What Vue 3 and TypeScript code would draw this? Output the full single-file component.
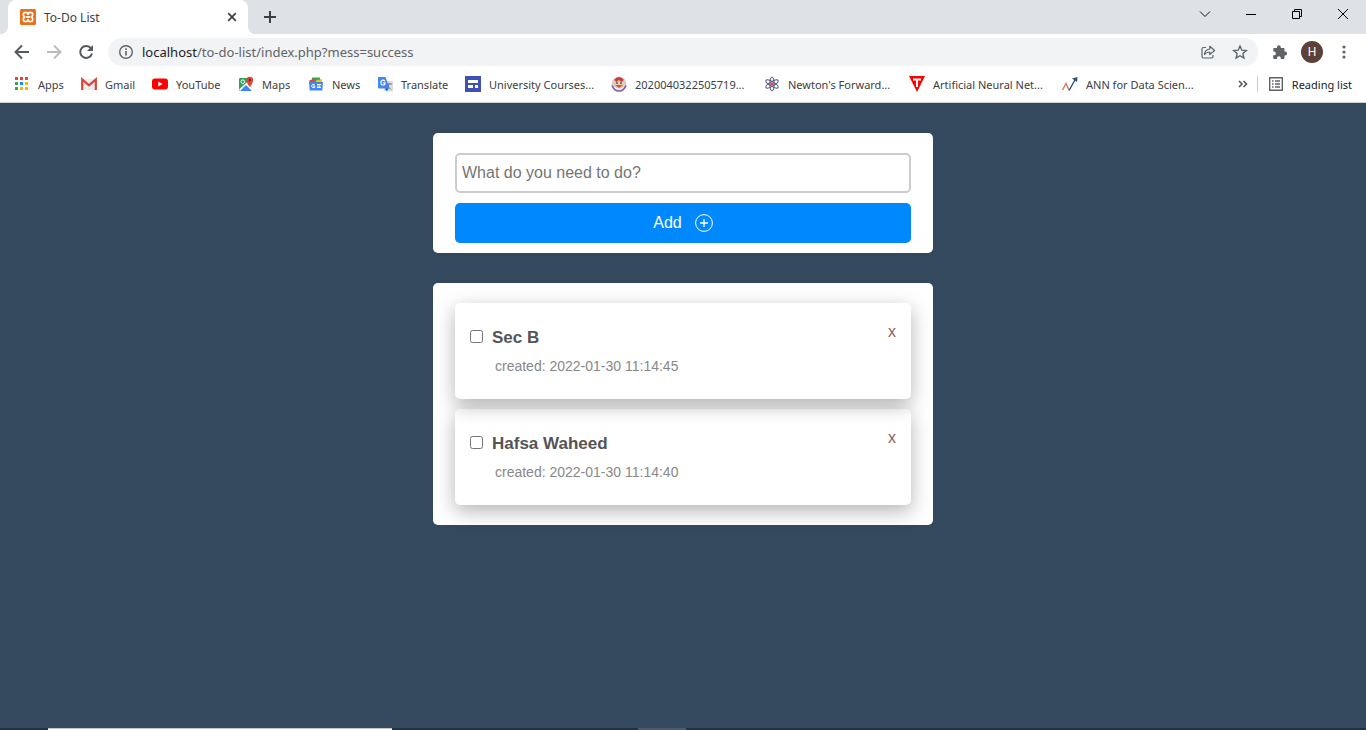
<script setup lang="ts">
import { ref } from 'vue'

interface Bookmark { icon: string; label: string }
interface Todo { id: number; title: string; created: string; done: boolean }

const bookmarks: Bookmark[] = [
  { icon: 'apps', label: 'Apps' },
  { icon: 'gmail', label: 'Gmail' },
  { icon: 'youtube', label: 'YouTube' },
  { icon: 'maps', label: 'Maps' },
  { icon: 'news', label: 'News' },
  { icon: 'translate', label: 'Translate' },
  { icon: 'university', label: 'University Courses...' },
  { icon: 'crest', label: '2020040322505719...' },
  { icon: 'atom', label: "Newton's Forward..." },
  { icon: 'tee', label: 'Artificial Neural Net...' },
  { icon: 'chart', label: 'ANN for Data Scien...' },
]

const draft = ref('')
const todos = ref<Todo[]>([
  { id: 2, title: 'Sec B', created: '2022-01-30 11:14:45', done: false },
  { id: 1, title: 'Hafsa Waheed', created: '2022-01-30 11:14:40', done: false },
])

function add() {
  const title = draft.value.trim()
  if (!title) return
  const created = new Date().toISOString().slice(0, 19).replace('T', ' ')
  todos.value.unshift({ id: Date.now(), title, created, done: false })
  draft.value = ''
}

function remove(id: number) {
  todos.value = todos.value.filter((t) => t.id !== id)
}
</script>

<template>
  <div class="window">
    <header class="chrome">
      <div class="tabs">
        <div class="tab">
          <svg class="icon" viewBox="0 0 16 16">
            <rect width="16" height="16" rx="1.500" fill="#e8711c" />
            <path d="M5.200 3.500Q8 3.200 8 6Q8 3.200 10.800 3.500Q13 3.700 12.600 6Q12.500 7.300 11.500 8Q12.500 8.700 12.600 10Q13 12.300 10.800 12.500Q8 12.800 8 10Q8 12.800 5.200 12.500Q3 12.300 3.400 10Q3.500 8.700 4.500 8Q3.500 7.300 3.400 6Q3 3.700 5.200 3.500z" fill="none" stroke="#fff" stroke-width="1.700" />
            <path d="M6 8h4" stroke="#fff" stroke-width="1.800" />
          </svg>
          <span class="tab-title">To-Do List</span>
          <button class="plain" aria-label="Close tab">
            <svg class="icon" viewBox="0 0 16 16"><path d="M4.200 4.200l7.600 7.600M11.800 4.200l-7.600 7.600" stroke="#3c4043" stroke-width="1.700" /></svg>
          </button>
        </div>
        <button class="plain new-tab" aria-label="New tab">
          <svg class="icon" viewBox="0 0 16 16"><path d="M8 2v12M2 8h12" stroke="#3c4043" stroke-width="2" /></svg>
        </button>
        <div class="controls">
          <button class="plain" aria-label="Search tabs"><svg class="icon" viewBox="0 0 16 16"><path d="M3 5.500l5 5l5-5" fill="none" stroke="#111" /></svg></button>
          <button class="plain" aria-label="Minimize"><svg class="icon" viewBox="0 0 16 16"><path d="M3 8.500h10" stroke="#000" /></svg></button>
          <button class="plain" aria-label="Restore"><svg class="icon" viewBox="0 0 16 16"><path d="M3.500 5.500h7v7h-7zM5.500 5.500v-2h7v7h-2" fill="none" stroke="#000" /></svg></button>
          <button class="plain" aria-label="Close"><svg class="icon" viewBox="0 0 16 16"><path d="M3 3l10 10M13 3L3 13" stroke="#000" /></svg></button>
        </div>
      </div>

      <div class="toolbar">
        <button class="plain" aria-label="Back"><svg class="icon" viewBox="0 0 16 16"><path d="M15 8H2M8 1.500L1.500 8L8 14.500" fill="none" stroke="#54585c" stroke-width="1.900" /></svg></button>
        <button class="plain" aria-label="Forward"><svg class="icon" viewBox="0 0 16 16"><path d="M1 8h13M8 1.500L14.500 8L8 14.500" fill="none" stroke="#babcbe" stroke-width="1.900" /></svg></button>
        <button class="plain" aria-label="Reload"><svg class="icon" viewBox="0 0 16 16"><path d="M13 4.300A6 6 0 1 0 14 9.500" fill="none" stroke="#54585c" stroke-width="2" /><path d="M15 1v6H9z" fill="#54585c" /></svg></button>
        <div class="omnibox">
          <svg class="icon" viewBox="0 0 16 16"><circle cx="8" cy="8" r="6.300" fill="none" stroke="#5f6368" stroke-width="1.400" /><path d="M8 7v4.500M8 4.300v1.600" stroke="#5f6368" stroke-width="1.600" /></svg>
          <div class="url"><span class="host">localhost</span>/to-do-list/index.php?mess=success</div>
          <button class="plain" aria-label="Share"><svg class="icon" viewBox="0 0 16 16"><path d="M6 3.500H3.500q-1.500 0-1.500 1.500v7.500Q2 14 3.500 14h8q1.500 0 1.500-1.500V11" fill="none" stroke="#5f6368" stroke-width="1.200" /><path d="M4.500 10.500Q5 5.500 9.800 5V2.300L14.600 6.500L9.800 10.500V8Q6.500 8 4.500 10.500z" fill="none" stroke="#5f6368" stroke-width="1.200" stroke-linejoin="round" /></svg></button>
          <button class="plain" aria-label="Bookmark this tab"><svg class="icon" viewBox="0 0 16 16"><path d="M8 2l1.800 4.200l4.500.4l-3.400 3l1 4.400L8 11.700L4.100 14l1-4.400l-3.400-3l4.500-.4z" fill="none" stroke="#5f6368" stroke-width="1.400" /></svg></button>
        </div>
        <button class="plain" aria-label="Extensions"><svg class="icon" viewBox="0 0 16 16"><path d="M1.500 4H5V3.200a1.900 1.900 0 0 1 3.800 0V4h2.700q1 0 1 1v2.600h.7a1.900 1.900 0 0 1 0 3.800h-.7V14q0 1-1 1H8.800v-.8a1.900 1.900 0 0 0-3.800 0V15H2.200q-1 0-1-1v-2.700H2a1.900 1.900 0 0 0 0-3.800h-.8z" fill="#5f6368" /></svg></button>
        <button class="plain avatar">H</button>
        <button class="plain" aria-label="Menu"><svg class="icon" viewBox="0 0 16 16"><g fill="#5f6368"><circle cx="8" cy="3" r="1.600" /><circle cx="8" cy="8" r="1.600" /><circle cx="8" cy="13" r="1.600" /></g></svg></button>
      </div>

      <nav class="bookmarks">
        <a v-for="b in bookmarks" :key="b.label" class="bookmark" href="#">
          <svg class="icon" viewBox="0 0 16 16">
            <g v-if="b.icon === 'apps'">
              <path d="M1 1h3v3H1zM6 1h3v3H6zM11 1h3v3h-3z" fill="#ea4335" />
              <path d="M1 6h3v3H1zM1 11h3v3H1z" fill="#34a853" />
              <path d="M6 6h3v3H6z" fill="#1a8cff" />
              <path d="M11 6h3v3h-3zM6 11h3v3H6zM11 11h3v3h-3z" fill="#fbb400" />
            </g>
            <g v-else-if="b.icon === 'gmail'">
              <path d="M1 3h14v11H1z" fill="#ececec" />
              <path d="M1.200 14V3.500L8 9.300l6.800-5.800V14" fill="none" stroke="#dc4437" stroke-width="2.200" />
            </g>
            <g v-else-if="b.icon === 'youtube'">
              <rect y="2.500" width="16" height="11" rx="3" fill="#f00" /><path d="M6.300 5.500v5l4.200-2.500z" fill="#fff" />
            </g>
            <g v-else-if="b.icon === 'maps'">
              <rect x="1" y="2" width="13" height="13" rx="1" fill="#34a356" />
              <path d="M1 13.500L12.500 3L14 7v8H2z" fill="#fff" />
              <path d="M2 15l6-6l6 6z" fill="#4285f4" /><path d="M9 8l4-3l1 8z" fill="#dadada" />
              <circle cx="4.800" cy="5.700" r="1.800" fill="none" stroke="#fff" />
              <path d="M11.800 11Q8.500 7 8.500 4a3.300 3.300 0 0 1 6.600 0q0 3-3.300 7z" fill="#e14335" /><circle cx="11.800" cy="4" r="1.200" fill="#8b1e16" />
            </g>
            <g v-else-if="b.icon === 'news'">
              <path d="M4 1.500h8V8H4z" fill="#34a853" /><path d="M1.200 4.500L6 2.800L8 8H2z" fill="#ea4335" /><path d="M8 4.500l6-1.500v5H8z" fill="#fbbc04" />
              <path d="M1 6h14l-.7 8.500H1.700z" fill="#4285f4" />
              <path d="M6.700 8.600Q4 7.500 3.500 10Q4 12.500 6.700 11.500V10H5M9 8.500h4M9 10h3.500M9 11.500h4" fill="none" stroke="#fff" />
            </g>
            <g v-else-if="b.icon === 'translate'">
              <rect x="7" y="5" width="9" height="10.500" rx="1" fill="#dadce0" /><path d="M9 8h6M12 7v1q-.5 3-2.500 4.500M10 9.500l4 4" fill="none" stroke="#607d8b" />
              <path d="M1 1h7.500l4 11.500H2q-1 0-1-1z" fill="#4285f4" /><path d="M8 12.500h4L9.500 15z" fill="#174ea6" />
              <path d="M8 5Q5.500 3 4 5.500Q3.500 9 6 9Q8 9 8 6.900H6.200" fill="none" stroke="#fff" stroke-width="1.200" />
            </g>
            <g v-else-if="b.icon === 'university'">
              <rect width="16" height="16" fill="#3f51b5" /><path d="M3 4h10v3H3zM3 9h5v3H3zM10 9h3v3h-3z" fill="#fff" />
            </g>
            <g v-else-if="b.icon === 'crest'">
              <circle cx="8" cy="8" r="7.500" fill="#d9ccd6" /><circle cx="8" cy="7" r="5.500" fill="#e9c9a0" />
              <path d="M3 4Q8-2 13 4L10.500 6L8 4L5.500 6z" fill="#c9403a" /><path d="M4 9h8L8 12z" fill="#d0524a" /><path d="M5 7h2M9 7h2" stroke="#37699a" stroke-width="1.500" />
              <path d="M1 9.500Q3 15 8 15t7-5.500" fill="none" stroke="#7a5eb0" stroke-width="1.600" /><path d="M3.500 11.500Q8 15 12.500 11.500" fill="none" stroke="#fff" />
            </g>
            <g v-else-if="b.icon === 'atom'" fill="none" stroke="#4a5478">
              <ellipse cx="8" cy="8" rx="2.200" ry="7" /><ellipse cx="8" cy="8" rx="2.200" ry="7" transform="rotate(60 8 8)" /><ellipse cx="8" cy="8" rx="2.200" ry="7" transform="rotate(120 8 8)" />
              <circle cx="8" cy="8" r="1.600" fill="#f33" stroke="none" />
            </g>
            <g v-else-if="b.icon === 'tee'">
              <path d="M0 0h16L8 16z" fill="#f00" /><path d="M4 3.500h8M8 3.500V11" stroke="#fff" stroke-width="2" />
            </g>
            <g v-else fill="none">
              <path d="M.5 14L4 7.500L7 14" stroke="#e0705c" stroke-width="1.300" /><path d="M7 14.500L13.500 3" stroke="#24527a" stroke-width="1.400" /><path d="M10 2.500L15.500 1L15 6z" fill="#24527a" />
            </g>
          </svg>
          <span>{{ b.label }}</span>
        </a>
        <button class="plain more" aria-label="More bookmarks"><svg class="icon" viewBox="0 0 16 16"><path d="M4 5l3 3l-3 3M8.500 5l3 3l-3 3" fill="none" stroke="#54585c" stroke-width="1.600" /></svg></button>
        <button class="plain reading">
          <svg class="icon" viewBox="0 0 16 16"><path d="M1.700 1.700h12.600v12.600H1.700z" fill="none" stroke="#5f6368" stroke-width="1.400" /><path d="M4 5h1.500M4 8h1.500M4 11h1.500M7 5h5M7 8h5M7 11h5" stroke="#5f6368" stroke-width="1.400" /></svg>
          <span>Reading list</span>
        </button>
      </nav>
    </header>

    <main class="page">
      <form class="panel add-form" @submit.prevent="add">
        <input v-model="draft" class="task-input" type="text" aria-label="New task" placeholder="What do you need to do?" />
        <button class="add-button" type="submit">
          Add
          <svg class="plus" viewBox="0 0 18 18"><circle cx="9" cy="9" r="8.400" fill="none" stroke="#fff" /><path d="M9 5v8M5 9h8" stroke="#fff" stroke-width="1.300" /></svg>
        </button>
      </form>

      <section class="panel list">
        <article v-for="t in todos" :key="t.id" class="todo">
          <div class="todo-body">
            <label class="todo-label">
              <input v-model="t.done" type="checkbox" class="check" />
              <span class="todo-title" :class="{ done: t.done }">{{ t.title }}</span>
            </label>
            <small class="created">created: {{ t.created }}</small>
          </div>
          <button class="plain remove" :aria-label="'Remove ' + t.title" @click="remove(t.id)">x</button>
        </article>
      </section>
    </main>

    <footer class="taskbar">
      <span class="running"></span>
      <span class="active"></span>
    </footer>
  </div>
</template>

<style>
html, body { margin: 0; background: #34495e; }
</style>

<style scoped>
* { box-sizing: border-box; }
.window { min-height: 100vh; display: flex; flex-direction: column; font-family: "Noto Sans", "Open Sans", sans-serif; font-size: 12px; color: #3c4043; }
.plain { border: 0; padding: 0; margin: 0; background: none; color: inherit; font: inherit; display: flex; align-items: center; justify-content: center; }
.icon { width: 16px; height: 16px; display: block; flex: none; }
.chrome { background: #fff; border-bottom: 1px solid #d0d3d7; }
.tabs { height: 34px; background: #dee1e6; display: flex; align-items: center; padding-left: 8px; }
.tab { position: relative; width: 240px; height: 34px; padding: 0 8px 0 12px; background: #fff; border-radius: 8px 8px 0 0; display: flex; align-items: center; gap: 8px; }
.tab::before, .tab::after { content: ""; position: absolute; bottom: 0; width: 8px; height: 8px; }
.tab::before { left: -8px; background: radial-gradient(circle at 0 0, transparent 8px, #fff 8px); }
.tab::after { right: -8px; background: radial-gradient(circle at 100% 0, transparent 8px, #fff 8px); }
.tab-title { flex: 1; }
.new-tab { margin-left: 14px; }
.controls { margin-left: auto; display: flex; align-self: flex-start; height: 28px; }
.controls .plain { width: 46px; }
.toolbar { height: 36px; display: flex; align-items: center; gap: 16px; padding: 0 14px; }
.omnibox { flex: 1; height: 28px; margin: 0 -2px; border-radius: 14px; background: #f1f3f4; display: flex; align-items: center; padding: 0 10px; gap: 16px; }
.url { flex: 1; margin-left: -8px; font-size: 13px; color: #5f6368; }
.host { color: #202124; }
.avatar { width: 22px; height: 22px; margin: 0 -3px; border-radius: 50%; background: #5d4037; color: #fff; font-family: Roboto, sans-serif; font-size: 12px; }
.bookmarks { height: 28px; margin-bottom: 4px; display: grid; grid-template-columns: 67px 71px 86px 70px 69px 88px 146px 153px 145px 153px 1fr 16px auto; align-items: center; padding: 0 14px; font-size: 11px; white-space: nowrap; }
.bookmark { display: flex; align-items: center; gap: 8px; color: inherit; text-decoration: none; }
.reading { gap: 8px; height: 16px; margin-left: 6px; padding-left: 10px; border-left: 1px solid #c8cbcf; color: #202124; }
.page { flex: 1; padding-top: 30px; font-family: "Liberation Sans", Arial, sans-serif; }
.panel { width: 500px; max-width: 100%; margin: 0 auto 30px; background: #fff; border-radius: 5px; }
.add-form { padding: 20px 22px 10px; display: flex; flex-direction: column; gap: 10px; }
.task-input { width: 100%; height: 40px; padding: 0 5px; border: 2px solid #ccc; border-radius: 5px; font: 16px "Liberation Sans", Arial, sans-serif; background: #fff; }
.task-input::placeholder { color: #757575; }
.add-button { height: 40px; border: 0; border-radius: 5px; background: #0088ff; color: #fff; font: 16px "Liberation Sans", Arial, sans-serif; display: flex; align-items: center; justify-content: center; gap: 13px; }
.plus { width: 18px; height: 18px; }
.list { padding: 20px 22px; display: flex; flex-direction: column; gap: 10px; }
.todo { height: 96px; padding: 24px 15px; border-radius: 5px; display: flex; justify-content: space-between; align-items: flex-start; box-shadow: 0 6px 20px rgba(0, 0, 0, 0.3); }
.todo-label { display: flex; align-items: flex-start; gap: 9px; height: 20px; }
.check { width: 13px; height: 13px; margin: 3px 0 0; }
.todo-title { font-size: 17px; line-height: 22px; font-weight: bold; color: #555; }
.done { text-decoration: line-through; color: #999; }
.created { display: block; margin: 11px 0 0 25px; font-size: 14px; line-height: 16px; color: #888; }
.remove { color: #8b615d; font-size: 16px; line-height: 10px; }
.taskbar { height: 2px; background: #1f3440; display: flex; padding-left: 48px; }
.running { width: 344px; background: #fff; border-top: 1px solid #bfc5cb; }
.active { width: 48px; margin-left: 246px; background: #4d5a69; }
</style>
